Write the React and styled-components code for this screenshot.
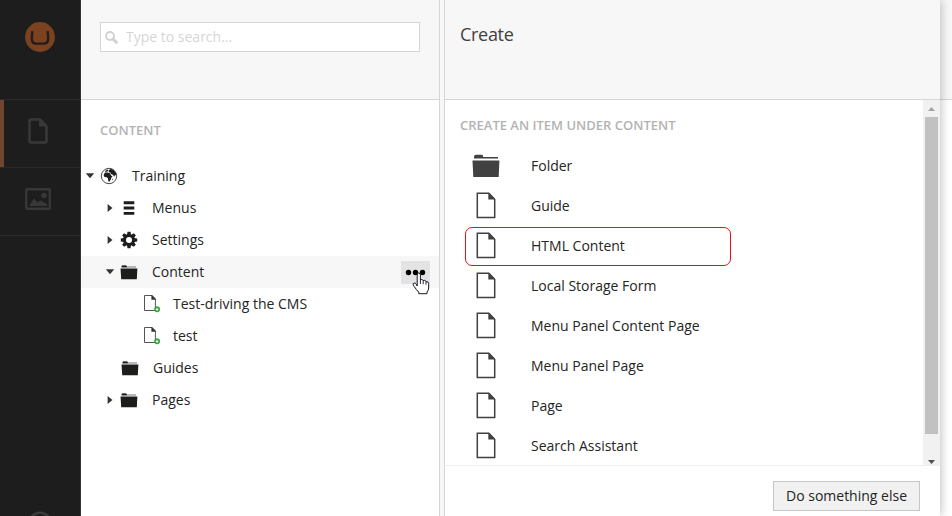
import React from "react";
import styled, { createGlobalStyle } from "styled-components";

const Global = createGlobalStyle`
  * { box-sizing: border-box; }
  body { margin: 0; overflow: hidden; background: #fff; }
  svg { display: block; flex: none; }
`;

const Shell = styled.div`
  display: flex;
  width: 952px;
  height: 516px;
  overflow: hidden;
  font-family: "Open Sans", sans-serif;
  font-size: 14px;
  color: #252523;
  background: #fff;
`;

const Sidebar = styled.nav`
  flex: none;
  width: 81px;
  background: #1d1d1d;
  border-right: 1px solid #343434;
  display: flex;
  flex-direction: column;
  overflow: hidden;
`;

const LogoArea = styled.div`
  height: 99px;
  padding: 22px 0 0 25px;
`;

const Section = styled.div`
  flex: none;
  height: ${(p) => (p.$last ? 69 : 68)}px;
  border-top: 1px solid #292929;
  border-bottom: ${(p) => (p.$last ? "1px solid #292929" : "0")};
  display: flex;
  align-items: flex-start;
  padding: ${(p) => p.$pad};
  box-shadow: ${(p) => (p.$active ? "inset 4px 0 0 #6f472f" : "none")};
`;

const HelpArea = styled.div`
  margin-top: auto;
  height: 5px;
  padding-left: 27px;
  overflow: hidden;
`;

const TreePanel = styled.section`
  flex: none;
  width: 359px;
  border-right: 1px solid #d6d6d6;
  display: flex;
  flex-direction: column;
`;

const Header = styled.header`
  flex: none;
  height: 100px;
  background: #f7f7f7;
  border-bottom: 1px solid #d6d6d6;
  padding: 22px 19px 0;
`;

const SearchBox = styled.label`
  display: flex;
  align-items: center;
  width: 320px;
  height: 30px;
  padding-left: 4px;
  gap: 8px;
  background: #fff;
  border: 1px solid #d6d6d6;
`;

const SearchInput = styled.input`
  border: 0;
  outline: 0;
  padding: 0 0 2px;
  width: 260px;
  height: 26px;
  background: transparent;
  font: 14px "Open Sans", sans-serif;
  &::placeholder { color: #d6d6d6; opacity: 1; }
`;

const Caption = styled.h2`
  margin: 0;
  padding-left: ${(p) => p.$left}px;
  font-size: 13px;
  line-height: 20px;
  font-weight: 600;
  text-transform: uppercase;
  color: #b3b3b3;
  white-space: nowrap;
`;

const TreeBody = styled.div`
  padding-top: 20px;
`;

const TreeList = styled.ul`
  list-style: none;
  margin: 20px 0 0;
  padding: 0;
`;

const TreeRow = styled.li`
  display: flex;
  align-items: center;
  height: 32px;
  padding-left: ${(p) => p.$indent}px;
  padding-right: 9px;
  background: ${(p) => (p.$selected ? "#f7f7f7" : "transparent")};
`;

const CaretSlot = styled.span`
  flex: none;
  width: 10px;
  height: 10px;
  margin-right: 5px;
`;

const IconSlot = styled.span`
  flex: none;
  width: 18px;
  display: flex;
  justify-content: center;
`;

const TreeLabel = styled.span`
  margin-left: ${(p) => (p.$page ? 12 : 14)}px;
  line-height: 20px;
  white-space: nowrap;
`;

const MoreButton = styled.button`
  position: relative;
  margin-left: auto;
  width: 29px;
  height: 23px;
  padding: 0;
  border: 0;
  background: #e3e3e3;
`;

const Pointer = styled.svg`
  position: absolute;
  left: 11px;
  top: 11px;
`;

const Divider = styled.div`
  flex: none;
  width: 5px;
  background: #f7f7f7;
  border-right: 1px solid #d6d6d6;
`;

const Dialog = styled.section`
  flex: none;
  width: 495px;
  display: flex;
  flex-direction: column;
  position: relative;
  background: #fff;
  box-shadow: 0 0 10px rgba(0, 0, 0, 0.3);
  clip-path: inset(0 -12px 0 0);
`;

const DialogHeader = styled(Header)`
  padding: 22px 15px 0;
`;

const Title = styled.h1`
  margin: 0;
  font-size: 18px;
  font-weight: 400;
  line-height: 25px;
  letter-spacing: -0.3px;
  color: #414141;
`;

const DialogBody = styled.div`
  flex: none;
  height: 366px;
  display: flex;
  border-bottom: 1px solid #eee;
`;

const ItemPane = styled.div`
  flex: 1;
  padding-top: 15px;
  overflow: hidden;
`;

const ItemList = styled.ul`
  list-style: none;
  margin: 12px 0 0;
  padding: 0 0 0 20px;
`;

const Item = styled.li`
  width: 266px;
  height: 39px;
  margin-bottom: 1px;
  padding-bottom: 2px;
  display: flex;
  align-items: center;
  border: 1px solid ${(p) => (p.$marked ? "#f01010" : "transparent")};
  border-radius: 7px;
`;

const ItemIcon = styled.span`
  flex: none;
  width: 40px;
  height: 32px;
  display: flex;
  align-items: center;
  justify-content: center;
`;

const ItemLabel = styled.span`
  margin-left: 25px;
  line-height: 20px;
  white-space: nowrap;
`;

const Scrollbar = styled.div`
  flex: none;
  width: 17px;
  display: flex;
  flex-direction: column;
  align-items: center;
  background: #f1f1f1;
`;

const ScrollArrow = styled.div`
  width: 17px;
  height: ${(p) => (p.$end ? 7 : 17)}px;
  display: flex;
  align-items: ${(p) => (p.$end ? "flex-start" : "center")};
  justify-content: center;
  padding-top: ${(p) => (p.$end ? 2 : 0)}px;
  margin-top: ${(p) => (p.$end ? "auto" : "0")};
`;

const Thumb = styled.div`
  width: 13px;
  height: 317px;
  background: #c1c1c1;
`;

const Footer = styled.footer`
  display: flex;
  justify-content: flex-end;
  padding: 15px 20px 0 0;
`;

const ActionButton = styled.button`
  width: 147px;
  height: 30px;
  padding: 0 0 2px;
  border: 1px solid #c6c6c6;
  background: #f1f1f1;
  color: #252523;
  font: 14px "Open Sans", sans-serif;
  white-space: nowrap;
`;

const Backdrop = styled.div`
  flex: 1;
  min-width: 0;
`;

const BackdropHeader = styled(Header)`
  padding: 0;
`;

const Logo = () => (
  <svg width="30" height="30" viewBox="0 0 30 30">
    <circle cx="15" cy="15" r="14.9" fill="#7b4222" />
    <path d="M7.4 9.2C6.2 18.6 6.6 21.6 11 21.6H19C23.4 21.6 23.8 18.6 22.6 9.2" fill="none" stroke="#241d1a" strokeWidth="2.4" />
  </svg>
);

const SectionDoc = () => (
  <svg width="20" height="26" viewBox="0 0 20 26">
    <path d="M3 1.5H12L18.5 8.5V23Q18.5 24.5 17 24.5H3Q1.5 24.5 1.5 23V3Q1.5 1.5 3 1.5Z" fill="none" stroke="#383838" strokeWidth="2.6" />
    <path d="M11 1V8.5H19V7L13 1Z" fill="#383838" />
  </svg>
);

const SectionImage = () => (
  <svg width="26" height="22" viewBox="0 0 26 22">
    <rect x="1.25" y="1.25" width="23.5" height="19.5" rx=".5" fill="none" stroke="#383838" strokeWidth="2.3" />
    <circle cx="19" cy="7.5" r="2.7" fill="#383838" />
    <path d="M4 18L9 10.5L12.5 14.5L15.5 12.5L22 16V18Z" fill="#383838" />
  </svg>
);

const SearchIcon = () => (
  <svg width="13" height="13" viewBox="0 0 13 13">
    <circle cx="5" cy="5" r="4" fill="none" stroke="#d0d0d0" strokeWidth="1.8" />
    <path d="M8 8L11.3 11.3" stroke="#d0d0d0" strokeWidth="3" strokeLinecap="round" />
  </svg>
);

const Caret = ({ open }) => (
  <svg width="10" height="10" viewBox="0 0 10 10">
    <path d={open ? "M.8 2.3H9.2L5 7.2Z" : "M2.6 1L7.5 5L2.6 9Z"} fill="#343434" />
  </svg>
);

const Globe = () => (
  <svg width="18" height="18" viewBox="0 0 18 18">
    <circle cx="9" cy="9" r="7.7" fill="#fff" stroke="#343434" strokeWidth=".9" />
    <path d="M4 7L5.2 5.6L7.8 5.4L10 6.3L11.2 8.7L12.6 9.1L11.2 10.9L10.8 12.6L9.4 14.8L8.3 14.2L8 11.4L6.8 10.3L4.6 10L3.7 8.6Z" fill="#1d1d1b" />
    <path d="M5 4.2L7 2.6L8.4 2.9L7.8 4.3L5.7 4.9ZM8.8 3.2L10.8 1.8L13.8 3.2L15.8 6L16.3 8.6L15 8L14.2 9.8L12.9 7.8L11.3 7.3L10.2 5.5L8.8 4.9Z" fill="#1d1d1b" />
    <path d="M12.3 12L13.1 11.5L12.7 13L12 13.3Z" fill="#1d1d1b" />
  </svg>
);

const Bars = () => (
  <svg width="12" height="14" viewBox="0 0 12 14">
    <path d="M.7 .3H11.3V3.2H.7ZM.7 5.6H11.3V8.5H.7ZM.7 10.9H11.3V13.8H.7Z" fill="#1d1d1b" />
  </svg>
);

const Gear = () => (
  <svg width="18" height="18" viewBox="-9 -9 18 18">
    <g fill="#1d1d1b">
      {[0, 45, 90, 135].map((a) => (
        <path key={a} d="M-1.5 -8.2H1.5L2 -5H-2ZM-1.5 8.2H1.5L2 5H-2Z" transform={`rotate(${a})`} />
      ))}
    </g>
    <circle r="4.5" fill="none" stroke="#1d1d1b" strokeWidth="3" />
  </svg>
);

const TreeFolder = () => (
  <svg width="18" height="15" viewBox="0 0 18 15">
    <path d="M1.6 2.6V1.5Q1.6 .4 2.6 .4H5.8Q6.6 .4 6.8 1.4H16V2.6Z" fill="#777774" />
    <path d="M1.6 2.2V1.5Q1.6 .4 2.6 .4H5.8Q6.6 .4 6.8 1.4V2.2Z" fill="#1d1d1b" />
    <path d="M.5 3.6H17.4L16.8 14.2H1.2Z" fill="#1d1d1b" />
  </svg>
);

const TreeDoc = () => (
  <svg width="18" height="20" viewBox="0 0 18 20">
    <path d="M9.2 1.5H1.5V16.5H12.4V5.2L8.8 1.5" fill="#fff" stroke="#555" strokeWidth="1" />
    <path d="M8.4 1V5.7H12.9V5L9 1Z" fill="#343434" />
    <circle cx="14.1" cy="15.3" r="2.1" fill="#fff" stroke="#35a842" strokeWidth="1.7" />
    <path d="M14.1 13.4V15" stroke="#35a842" strokeWidth=".8" />
  </svg>
);

const LargeFolder = () => (
  <svg width="28" height="24" viewBox="0 0 28 24">
    <path d="M2 4.6V3Q2 .7 4 .7H9.6Q11 .7 11.3 3H26V4.6Z" fill="#414141" />
    <path d="M.5 6.4H27.4L26.7 23H1.3Z" fill="#414141" />
  </svg>
);

const LargeDoc = () => (
  <svg width="20" height="27" viewBox="0 0 20 27">
    <path d="M1.3 1.2H12.8L18.7 7.2V25.6H1.3Z" fill="#fff" stroke="#414141" strokeWidth="1.5" />
    <path d="M12.3 1V7.5H19L18.8 6.8L13 .8Z" fill="#414141" />
  </svg>
);

const HandPointer = () => (
  <Pointer width="18" height="24" viewBox="0 0 18 24">
    <path
      d="M5.2 14V3Q5.2 1 6.8 1Q8.4 1 8.4 3V8Q9 7.3 10.2 7.6Q11 7.8 11.2 8.7Q12.4 8 13.5 8.7L14 9.7Q16.5 9.2 16.7 11.5V16Q16.4 18.5 15 20V21.7H6.7V20.2Q4.5 18 2.3 14.6L1.2 12.8Q.8 11.5 2 11Q3.3 10.7 4.1 12Z"
      fill="#fff"
      stroke="#15152b"
      strokeWidth="1"
    />
    <path d="M8.4 8V12M11.2 8.7V12.3M14 9.7V12.7" stroke="#15152b" strokeWidth=".9" />
  </Pointer>
);

const treeItems = [
  { label: "Training", indent: 4, caret: "open", icon: Globe },
  { label: "Menus", indent: 24, caret: "closed", icon: Bars },
  { label: "Settings", indent: 24, caret: "closed", icon: Gear },
  { label: "Content", indent: 24, caret: "open", icon: TreeFolder, selected: true },
  { label: "Test-driving the CMS", indent: 47, icon: TreeDoc },
  { label: "test", indent: 47, icon: TreeDoc },
  { label: "Guides", indent: 25, icon: TreeFolder },
  { label: "Pages", indent: 24, caret: "closed", icon: TreeFolder },
];

const createItems = [
  "Folder",
  "Guide",
  "HTML Content",
  "Local Storage Form",
  "Menu Panel Content Page",
  "Menu Panel Page",
  "Page",
  "Search Assistant",
];

export default function App() {
  return (
    <Shell>
      <Global />
      <Sidebar>
        <LogoArea><Logo /></LogoArea>
        <Section $active $pad="18px 0 0 28px"><SectionDoc /></Section>
        <Section $last $pad="20px 0 0 25px"><SectionImage /></Section>
        <HelpArea>
          <svg width="26" height="26" viewBox="0 0 26 26">
            <circle cx="13" cy="13" r="11.2" fill="none" stroke="#3b3b3b" strokeWidth="2.5" />
          </svg>
        </HelpArea>
      </Sidebar>
      <TreePanel>
        <Header>
          <SearchBox>
            <SearchIcon />
            <SearchInput placeholder="Type to search..." />
          </SearchBox>
        </Header>
        <TreeBody>
          <Caption $left={19}>Content</Caption>
          <TreeList>
            {treeItems.map(({ label, indent, caret, icon: Icon, selected }) => (
              <TreeRow key={label} $indent={indent} $selected={selected}>
                <CaretSlot>{caret && <Caret open={caret === "open"} />}</CaretSlot>
                <IconSlot><Icon /></IconSlot>
                <TreeLabel $page={Icon === TreeDoc}>{label}</TreeLabel>
                {selected && (
                  <MoreButton aria-label="Actions">
                    <svg width="29" height="23" viewBox="0 0 29 23">
                      <circle cx="7.5" cy="11.5" r="2.7" />
                      <circle cx="14.5" cy="11.5" r="2.7" />
                      <circle cx="21.5" cy="11.5" r="2.7" />
                    </svg>
                    <HandPointer />
                  </MoreButton>
                )}
              </TreeRow>
            ))}
          </TreeList>
        </TreeBody>
      </TreePanel>
      <Divider />
      <Dialog>
        <DialogHeader><Title>Create</Title></DialogHeader>
        <DialogBody>
          <ItemPane>
            <Caption $left={15}>Create an item under Content</Caption>
            <ItemList>
              {createItems.map((label) => (
                <Item key={label} $marked={label === "HTML Content"}>
                  <ItemIcon>{label === "Folder" ? <LargeFolder /> : <LargeDoc />}</ItemIcon>
                  <ItemLabel>{label}</ItemLabel>
                </Item>
              ))}
            </ItemList>
          </ItemPane>
          <Scrollbar>
            <ScrollArrow>
              <svg width="7" height="4" viewBox="0 0 7 4"><path d="M3.5 0L7 4H0Z" fill="#a3a3a3" /></svg>
            </ScrollArrow>
            <Thumb />
            <ScrollArrow $end>
              <svg width="7" height="4" viewBox="0 0 7 4"><path d="M0 0H7L3.5 4Z" fill="#505050" /></svg>
            </ScrollArrow>
          </Scrollbar>
        </DialogBody>
        <Footer><ActionButton>Do something else</ActionButton></Footer>
      </Dialog>
      <Backdrop><BackdropHeader /></Backdrop>
    </Shell>
  );
}
